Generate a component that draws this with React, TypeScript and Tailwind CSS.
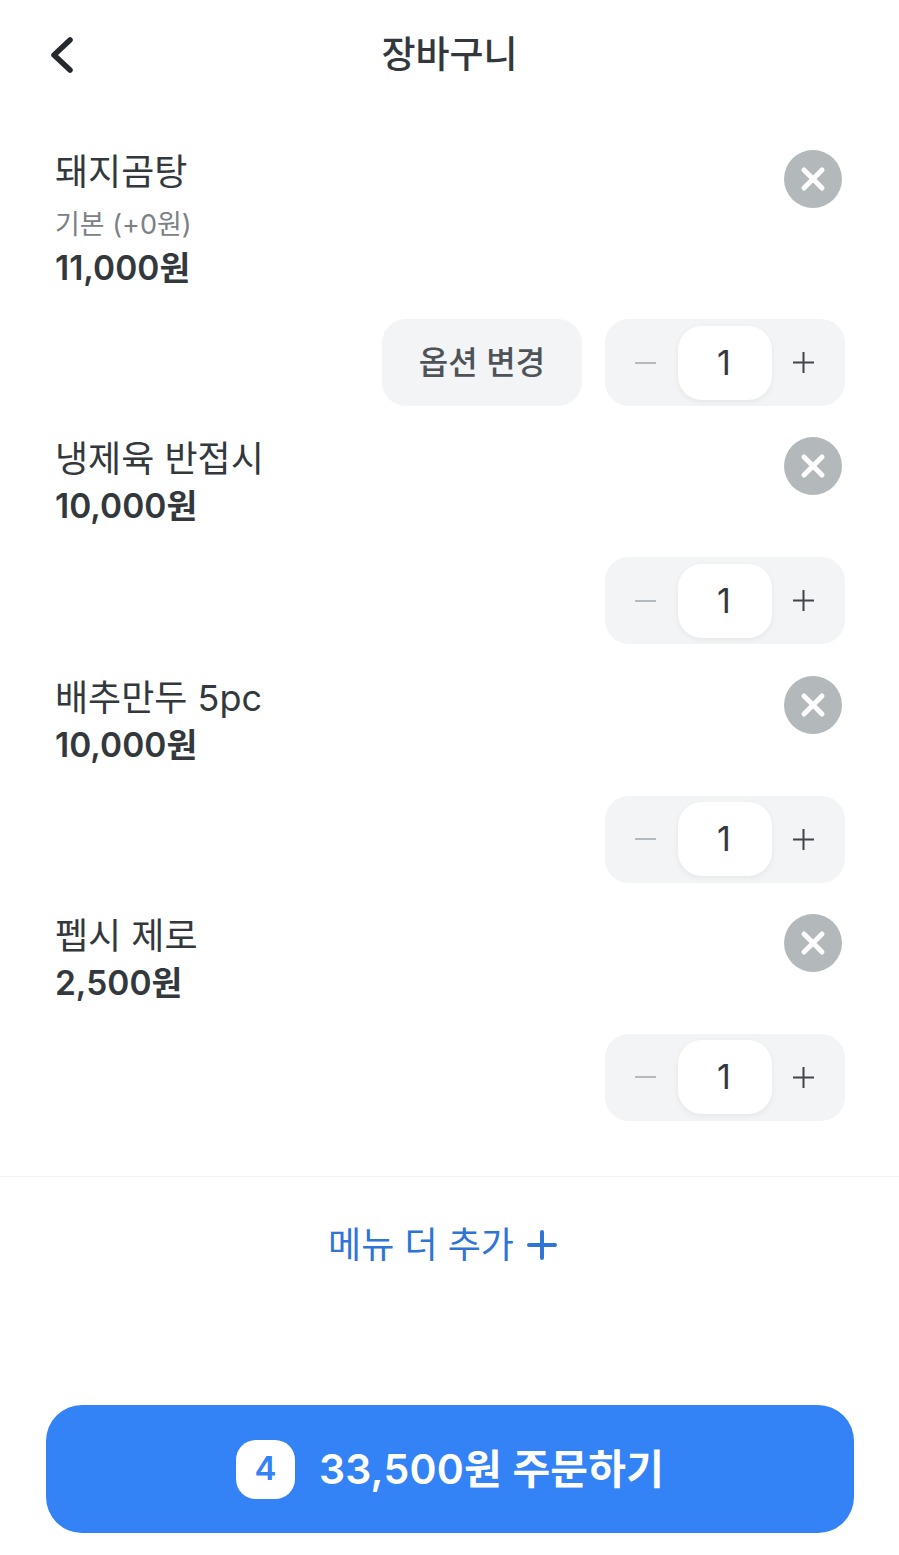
interface CartItem {
  name: string
  option?: string
  price: string
  canChangeOption?: boolean
}

const items: CartItem[] = [
  { name: "돼지곰탕", option: "기본 (+0원)", price: "11,000원", canChangeOption: true },
  { name: "냉제육 반접시", price: "10,000원" },
  { name: "배추만두 5pc", price: "10,000원" },
  { name: "펩시 제로", price: "2,500원" },
]

function RemoveButton() {
  return (
    <button className="w-[58px] h-[58px] rounded-full bg-[#b3b8bb] flex items-center justify-center">
      <svg width="26" height="26" viewBox="0 0 26 26" fill="none" stroke="#ffffff" strokeWidth="5" strokeLinecap="round">
        <path d="M4 4L22 22M22 4L4 22" />
      </svg>
    </button>
  )
}

function Stepper() {
  return (
    <div className="w-[240px] h-[87px] rounded-[24px] bg-[#f2f4f6] flex items-center justify-between px-[7px]">
      <span className="w-[66px] flex justify-center">
        <span className="w-[21px] h-[2px] bg-[#b5babe]" />
      </span>
      <span className="w-[94px] h-[74px] rounded-[24px] bg-white shadow-[0_2px_6px_rgba(0,0,0,0.06)] flex items-center justify-center pr-[2px] pb-[1px] text-[34px] text-[#33383d]">
        1
      </span>
      <span className="w-[66px] flex justify-center pr-[4px]">
        <svg width="21" height="21" viewBox="0 0 21 21" stroke="#3f454a" strokeWidth="2">
          <path d="M0 10.5H21M10.5 0V21" />
        </svg>
      </span>
    </div>
  )
}

function CartRow({ item }: { item: CartItem }) {
  return (
    <div className="pl-[55px] pr-[54px] pb-[29.33px]">
      <div className="flex justify-between">
        <div>
          <p className="text-[36px] leading-[46px] pt-[1px] text-[#33383d]">{item.name}</p>
          {item.option && <p className="text-[27px] leading-[44px] mt-[8px] -mb-[2px] text-[#7b8186]">{item.option}</p>}
          <p className={`text-[33.5px] leading-[46px] font-semibold text-[#33383d] ${item.option ? "" : "mt-[1px]"}`}>{item.price}</p>
        </div>
        <div className="mr-[3px] mt-[2px]">
          <RemoveButton />
        </div>
      </div>
      <div className="flex justify-end gap-[23px] mt-[28px]">
        {item.canChangeOption && (
          <button className="w-[200px] h-[87px] rounded-[24px] bg-[#f2f4f6] text-[32px] font-medium text-[#4e5358]">
            옵션 변경
          </button>
        )}
        <Stepper />
      </div>
    </div>
  )
}

export default function App() {
  return (
    <div className="w-[899px] h-[1555px] bg-white flex flex-col font-['Inter','Noto_Sans_CJK_KR',sans-serif]">
      <header className="h-[108px] shrink-0 relative flex items-center justify-center">
        <svg className="absolute left-[45px] top-[32px]" width="34" height="46" viewBox="0 0 34 46" fill="none" stroke="#26292c" strokeWidth="5.5" strokeLinecap="round" strokeLinejoin="round">
          <path d="M25 8L9 23L25 38" />
        </svg>
        <h1 className="text-[37px] font-medium text-[#33383d] pt-[1px]">장바구니</h1>
      </header>

      <div className="pt-[40px]">
        {items.map((item) => (
          <CartRow key={item.name} item={item} />
        ))}
      </div>

      <div className="mt-[26px] border-t border-[#f2f3f5] pt-[41px] pr-[14px] flex items-center justify-center gap-[13px] text-[#2f74d6]">
        <span className="text-[36px] leading-[54px]">메뉴 더 추가</span>
        <svg width="30" height="30" viewBox="0 0 30 30" stroke="#2f74d6" strokeWidth="4" strokeLinecap="round">
          <path d="M2 15H28M15 2V28" />
        </svg>
      </div>

      <div className="mt-auto mb-[22px] pl-[46px] pr-[45px]">
        <button className="w-full h-[128px] rounded-[36px] bg-[#3382f6] flex items-center justify-center gap-[24px]">
          <span className="w-[59px] h-[59px] rounded-[20px] bg-white text-[#3382f6] text-[33px] font-semibold flex items-center justify-center">
            4
          </span>
          <span className="text-[41px] tracking-[0.2px] pt-[1px] font-semibold text-white">33,500원 주문하기</span>
        </button>
      </div>
    </div>
  )
}
